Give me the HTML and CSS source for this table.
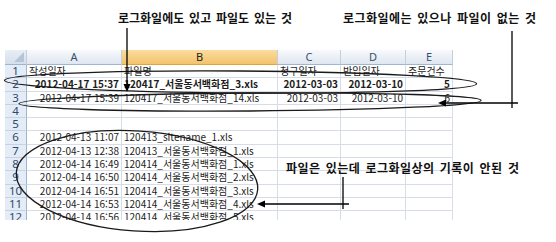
FILE: index.html
```html
<!DOCTYPE html>
<html lang="ko">
<head>
<meta charset="utf-8">
<title>로그화일 비교</title>
<link rel="stylesheet" href="styles.css">
</head>
<body>
<div class="page">
  <div class="labels">
    <span class="note note1">로그화일에도 있고 파일도 있는 것</span>
    <span class="note note2">로그화일에는 있으나 파일이 없는 것</span>
  </div>
  <div class="sheet">
    <div class="hd corner"><span class="tri"></span></div>
    <div class="hd">A</div>
    <div class="hd sel">B</div>
    <div class="hd">C</div>
    <div class="hd">D</div>
    <div class="hd">E</div>

    <div class="rn">1</div>
    <div class="c">작성일자</div><div class="c">파일명</div><div class="c">청구일자</div><div class="c">반입일자</div><div class="c">주문건수</div>

    <div class="rn">2</div>
    <div class="c r b">2012-04-17 15:37</div><div class="c b">120417_서울동서백화점_3.xls</div><div class="c r b">2012-03-03</div><div class="c r b">2012-03-10</div><div class="c r b">5</div>

    <div class="rn">3</div>
    <div class="c r">2012-04-17 15:39</div><div class="c">120417_서울동서백화점_14.xls</div><div class="c r">2012-03-03</div><div class="c r">2012-03-10</div><div class="c r">6</div>

    <div class="rn">4</div>
    <div class="c"></div><div class="c"></div><div class="c"></div><div class="c"></div><div class="c"></div>

    <div class="rn">5</div>
    <div class="c"></div><div class="c"></div><div class="c"></div><div class="c"></div><div class="c"></div>

    <div class="rn">6</div>
    <div class="c r">2012-04-13 11:07</div><div class="c">120413_sitename_1.xls</div><div class="c"></div><div class="c"></div><div class="c"></div>

    <div class="rn">7</div>
    <div class="c r">2012-04-13 12:38</div><div class="c">120413_서울동서백화점_1.xls</div><div class="c"></div><div class="c"></div><div class="c"></div>

    <div class="rn">8</div>
    <div class="c r">2012-04-14 16:49</div><div class="c">120414_서울동서백화점_1.xls</div><div class="c"></div><div class="c"></div><div class="c"></div>

    <div class="rn">9</div>
    <div class="c r">2012-04-14 16:50</div><div class="c">120414_서울동서백화점_2.xls</div><div class="c"></div><div class="c"></div><div class="c"></div>

    <div class="rn">10</div>
    <div class="c r">2012-04-14 16:51</div><div class="c">120414_서울동서백화점_3.xls</div><div class="c"></div><div class="c"></div><div class="c"></div>

    <div class="rn">11</div>
    <div class="c r">2012-04-14 16:53</div><div class="c">120414_서울동서백화점_4.xls</div><div class="c"></div><div class="c"></div><div class="c"></div>

    <div class="rn">12</div>
    <div class="c r">2012-04-14 16:56</div><div class="c">120414_서울동서백화점_5.xls</div><div class="c"></div><div class="c"></div><div class="c"></div>
  </div>

  <span class="note note3">파일은 있는데 로그화일상의 기록이 안된 것</span>

  <svg class="overlay" width="556" height="242" viewBox="0 0 556 242">
    <g fill="none" stroke="#1a1a1a" stroke-width="1.3">
      <ellipse cx="240.5" cy="82" rx="236" ry="11" transform="rotate(0.4 240 82)"/>
      <ellipse cx="250" cy="102" rx="231" ry="9" transform="rotate(-0.4 250 102)"/>
      <ellipse cx="137" cy="181" rx="121" ry="50" transform="rotate(4 137 181)"/>
    </g>
    <g stroke="#000" stroke-width="1.3" fill="none">
      <line x1="127" y1="28" x2="127" y2="85"/>
      <line x1="512" y1="31" x2="512" y2="108"/>
      <line x1="518" y1="103" x2="444" y2="103"/>
      <line x1="343" y1="177" x2="343" y2="209"/>
      <line x1="349" y1="204" x2="263" y2="204"/>
    </g>
    <g fill="#000">
      <polygon points="123.5,84 130.5,84 127,92"/>
      <polygon points="446,99.5 446,106.5 438,103"/>
      <polygon points="265,200.5 265,207.5 257,204"/>
    </g>
  </svg>
</div>
</body>
</html>
```

FILE: styles.css
```css
html, body {
  margin: 0;
  padding: 0;
  background: #ffffff;
}

.page {
  position: relative;
  width: 556px;
  height: 242px;
  overflow: hidden;
  font-family: "Noto Sans CJK KR", "Noto Sans", sans-serif;
  color: #1c1c1c;
}

.overlay {
  position: absolute;
  left: 0;
  top: 0;
  pointer-events: none;
}

.labels {
  display: flex;
  height: 50px;
  padding-left: 118px;
  box-sizing: border-box;
  padding-top: 10px;
  gap: 51px;
}

.note {
  font-size: 12px;
  font-weight: bold;
  line-height: 16px;
  color: #111;
  word-spacing: 1.5px;
  white-space: nowrap;
}

.note2 {
  letter-spacing: 0.45px;
}

.note3 {
  position: absolute;
  left: 286px;
  top: 160px;
  letter-spacing: 0.45px;
}

.sheet {
  margin-left: 5px;
  display: grid;
  grid-template-columns: 22px 95px 156px 63px 65px 47px;
  grid-template-rows: 15px;
  grid-auto-rows: 13.3px;
  height: 170px;
  width: 448px;
  overflow: hidden;
  font-size: 10px;
}

.hd {
  box-sizing: border-box;
  background: linear-gradient(#f7f9fc, #dfe6f0);
  border-right: 1px solid #c3cfdf;
  border-bottom: 1px solid #9eb6ce;
  text-align: center;
  font-size: 11px;
  line-height: 14px;
  color: #34506e;
  font-family: "Noto Sans", sans-serif;
}

.hd.sel {
  background: linear-gradient(#fbdc9f, #f2c36c);
  border-bottom-color: #e0a53a;
  color: #222;
}

.corner {
  position: relative;
  background: linear-gradient(#e9eef5, #d5deea);
}

.tri {
  position: absolute;
  right: 2px;
  bottom: 2px;
  width: 0;
  height: 0;
  border-left: 10px solid transparent;
  border-bottom: 10px solid #b5c5d8;
}

.rn {
  box-sizing: border-box;
  background: #e4ecf7;
  border-right: 1px solid #9eb6ce;
  border-bottom: 1px solid #c5d3e4;
  text-align: center;
  font-size: 11.5px;
  line-height: 12px;
  color: #2f4a6a;
  font-family: "Noto Sans", sans-serif;
}

.c {
  box-sizing: border-box;
  border-right: 1px solid #d6dde9;
  border-bottom: 1px solid #d6dde9;
  padding: 0 2px;
  line-height: 12px;
  white-space: nowrap;
  overflow: visible;
}

.r {
  text-align: right;
}

.b {
  font-weight: bold;
}
```
